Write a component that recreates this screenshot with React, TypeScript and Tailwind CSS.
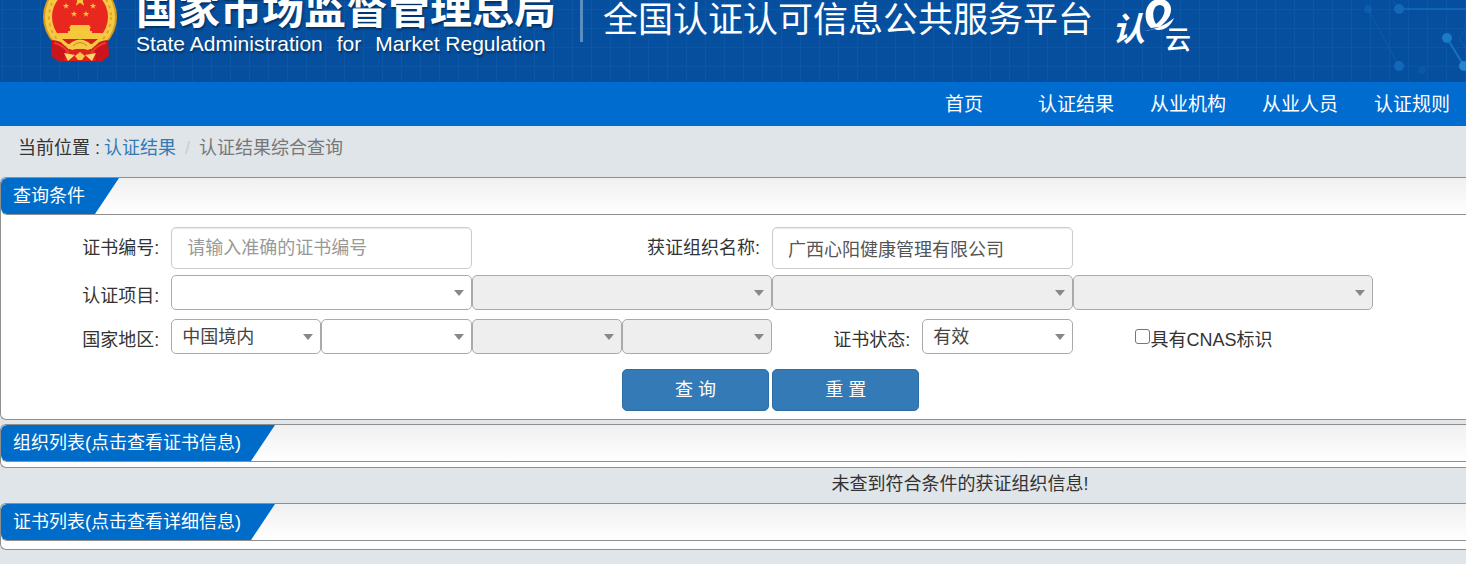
import type { ReactNode } from 'react'
import clsx from 'clsx'

const NAV = ['首页', '认证结果', '从业机构', '从业人员', '认证规则']

const STAR = '0,-10 2.4,-3.2 9.5,-3.1 3.8,1.2 5.9,8.1 0,4 -5.9,8.1 -3.8,1.2 -9.5,-3.1 -2.4,-3.2'

function Emblem() {
  return (
    <svg width="76" height="82" viewBox="0 0 76 82" aria-hidden className="shrink-0">
      <ellipse cx="38" cy="37" rx="37" ry="37" fill="#d99a1c" />
      <ellipse cx="38" cy="37" rx="35" ry="36" fill="#f6c944" />
      <ellipse cx="38" cy="37" rx="31" ry="33" fill="none" stroke="#e0a428" strokeWidth="2" strokeDasharray="3 4" />
      <circle cx="38" cy="37" r="28" fill="#e8281f" />
      <g fill="#f8c83c">
        <polygon points={STAR} transform="translate(38 20) scale(.7)" />
        <polygon points={STAR} transform="translate(24 26) scale(.33)" />
        <polygon points={STAR} transform="translate(51 26) scale(.33)" />
        <polygon points={STAR} transform="translate(32 34) scale(.33)" />
        <polygon points={STAR} transform="translate(44 34) scale(.33)" />
        <path d="M29 45h18l2 3h-1v3h2v2H26v-2h2v-3h-1z" />
        <path d="M15 53h46l-3 6H18z" />
      </g>
      <path d="M20 59h36l-6 5H26z" fill="#d81f1d" />
      {/* ribbons */}
      <path d="M10 60 Q18 60 23 66 L30 72 L24 81 L17 82 L9 76Z" fill="#c9151b" />
      <path d="M66 60 Q58 60 53 66 L46 72 L52 81 L59 82 L67 76Z" fill="#c9151b" />
      <path d="M24 69h28l2 12H22z" fill="#e0201f" />
      <path d="M12 63 Q20 64 27 73 M64 63 Q56 64 49 73" fill="none" stroke="#ee3a2c" strokeWidth="2" />
      <path d="M24 67 L30 62 Q38 57 46 62 L52 67 L46 70 L38 68 L30 70Z" fill="#f6c944" />
      <path d="M31 66 Q38 59 45 66" fill="none" stroke="#c98a1b" strokeWidth="1" />
      <path d="M22 73 L33 75 L26 81Z M54 73 L43 75 L50 81Z" fill="#f8d868" />
      <path d="M33 76 L38 72 L43 76 L40 80 L36 80Z" fill="#f6c944" />
    </svg>
  )
}

function CloudLogo() {
  return (
    <svg
      width="80"
      height="72"
      viewBox="0 0 80 72"
      role="img"
      aria-label="认e云"
      className="shrink-0 overflow-visible font-['Noto_Sans_CJK_SC',sans-serif]"
    >
      <text x="-1" y="47" fontSize="33" fontWeight="700" fontStyle="italic" fill="#fff">认</text>
      <path
        d="M38 34 C29 27 31 6 46 5 C60 5 61 19 53 27 L47 33Z M43 30 C53 23 54 11 47 11 C40 11 38 22 43 30Z"
        fill="#fff"
        fillRule="evenodd"
      />
      <path d="M29 37 C40 36 52 32 61 24 C57 34 48 38 41 35 C37 36 33 37 29 37Z" fill="#fff" />
      <text x="52" y="55" fontSize="26" fontWeight="500" fill="#fff">云</text>
    </svg>
  )
}

function Circuit() {
  return (
    <svg width="120" height="82" viewBox="0 0 120 82" aria-hidden className="absolute top-0 right-0">
      <g stroke="#1572c4" fill="none">
        <path d="M53 9H120" strokeWidth="2" opacity=".6" />
        <path d="M101 38L118 66" strokeWidth="2" />
        <path d="M22 9L53 66M47 0L53 9M120 28L113 38L120 49" opacity=".35" />
      </g>
      <g fill="#1468b9">
        <circle cx="22" cy="9" r="4" opacity=".5" />
        <circle cx="53" cy="9" r="5" />
        <circle cx="53" cy="66" r="5" />
        <circle cx="101" cy="38" r="5" fill="#1b7bc5" />
        <circle cx="118" cy="66" r="5" fill="#2385cd" />
        <circle cx="76" cy="70" r="4" opacity=".3" />
      </g>
    </svg>
  )
}

function PanelHeader({ title }: { title: string }) {
  return (
    <div className="flex rounded-l-md border-b border-[#8f8f8f] bg-linear-to-b from-[#f0f0f0] to-white">
      <h2 className="rounded-l-md bg-[#006cc9] pr-[34px] pl-3 leading-9 text-white [clip-path:polygon(0_0,100%_0,calc(100%-24px)_100%,0_100%)]">
        {title}
      </h2>
    </div>
  )
}

function Panel({ title, className, children }: { title: string; className?: string; children?: ReactNode }) {
  return (
    <section className={clsx('rounded-l-md border-y border-l border-[#8f8f8f] bg-white', className)}>
      <PanelHeader title={title} />
      {children}
    </section>
  )
}

function Label({ htmlFor, className, children }: { htmlFor: string; className?: string; children: ReactNode }) {
  return (
    <label htmlFor={htmlFor} className={clsx('pr-3 text-right whitespace-nowrap', className)}>
      {children}
    </label>
  )
}

function Select({
  id,
  label,
  value = '',
  disabled,
  wide,
}: {
  id: string
  label?: string
  value?: string
  disabled?: boolean
  wide?: boolean
}) {
  return (
    <div className={clsx('relative', wide && 'col-span-2')}>
      <select
        id={id}
        aria-label={label}
        disabled={disabled}
        defaultValue={value}
        className="block h-[35px] w-full appearance-none rounded-[5px] border border-[#aaa] bg-white pr-7 pl-[10px] text-[#444] disabled:bg-[#eee] disabled:opacity-100"
      >
        <option value={value}>{value}</option>
      </select>
      <span
        aria-hidden
        className="pointer-events-none absolute top-[15px] right-2 border-x-5 border-t-6 border-x-transparent border-t-[#888]"
      />
    </div>
  )
}

const INPUT =
  'col-span-2 h-[42px] w-full min-w-0 rounded-[5px] border border-[#ccc] bg-white px-[15px] text-[#555] shadow-[inset_0_1px_1px_rgba(0,0,0,0.08)] placeholder:text-[#999]'

export default function App() {
  return (
    <div className="min-h-screen bg-[#e0e5e9] font-['Liberation_Sans','Noto_Sans_CJK_SC',sans-serif] text-[18px] leading-6 font-normal text-[#333]">
      <header className="relative flex h-[82px] items-end overflow-hidden bg-[#064f9f] bg-[linear-gradient(to_right,#0a56a7_1px,transparent_1px),linear-gradient(to_bottom,#0a56a7_1px,transparent_1px)] bg-size-[19px_19px] bg-position-[2px_9px] pb-5 pl-[42px] text-white">
        <Circuit />
        <Emblem />
        <div className="ml-[18px] pb-[6px] whitespace-nowrap text-shadow-[1px_2px_2px_rgba(0,0,0,0.4)]">
          <p className="text-[42px] leading-[44px] font-bold">国家市场监督管理总局</p>
          <p className="flex gap-[14px] text-[21px] leading-6">
            <span>State Administration</span>
            <span>for</span>
            <span>Market Regulation</span>
          </p>
        </div>
        <div className="mb-5 ml-6 h-16 w-[3px] shrink-0 bg-[#5b8cc2]" />
        <h1 className="mb-5 ml-5 text-[35px] leading-[44px] whitespace-nowrap">全国认证认可信息公共服务平台</h1>
        <div className="-mb-1 ml-5">
          <CloudLogo />
        </div>
      </header>

      <nav className="flex h-11 items-center justify-end gap-9 bg-[#006cd0] pt-[2px] pr-4 text-[19px] text-white">
        {NAV.map((item) => (
          <a key={item} href="#" className="w-[76px] text-center whitespace-nowrap">
            {item}
          </a>
        ))}
      </nav>

      <div className="flex items-center px-[18px] pt-[10px] pb-[17px]">
        <span>当前位置 :</span>
        <a href="#" className="ml-1 text-[#337ab7]">认证结果</a>
        <span className="mx-[9px] text-[#ccc]">/</span>
        <span className="text-[#777]">认证结果综合查询</span>
      </div>

      <Panel title="查询条件">
        <form className="pt-3 pr-[93px] pb-2 pl-5" onSubmit={(e) => e.preventDefault()}>
          <div className="grid grid-cols-9 items-center">
            <Label htmlFor="cert-no">证书编号:</Label>
            <input id="cert-no" placeholder="请输入准确的证书编号" className={INPUT} />
            <Label htmlFor="org-name" className="col-span-2">获证组织名称:</Label>
            <input id="org-name" defaultValue="广西心阳健康管理有限公司" className={INPUT} />
          </div>
          <div className="mt-[6px] grid grid-cols-9 items-center">
            <Label htmlFor="item-1" className="pt-[6px]">认证项目:</Label>
            <Select id="item-1" wide />
            <Select id="item-2" label="认证项目" wide disabled />
            <Select id="item-3" label="认证项目" wide disabled />
            <Select id="item-4" label="认证项目" wide disabled />
          </div>
          <div className="mt-[9px] grid grid-cols-9 items-center">
            <Label htmlFor="area-1" className="pt-[6px]">国家地区:</Label>
            <Select id="area-1" value="中国境内" />
            <Select id="area-2" label="国家地区" />
            <Select id="area-3" label="国家地区" disabled />
            <Select id="area-4" label="国家地区" disabled />
            <Label htmlFor="status" className="pt-[6px]">证书状态:</Label>
            <Select id="status" value="有效" />
            <label className="col-span-2 flex items-center pt-[6px] pl-[62px] whitespace-nowrap">
              <input
                type="checkbox"
                className="mr-px mb-[6px] size-[15px] shrink-0 appearance-none rounded-[3px] border border-[#767676] bg-white checked:bg-[#337ab7]"
              />
              具有CNAS标识
            </label>
          </div>
          <div className="mt-[15px] grid grid-cols-9">
            <div className="col-start-5 pr-[3px]">
              <button type="submit" className="h-[42px] w-full rounded-[5px] border border-[#2e6da4] bg-[#337ab7] text-white">
                查 询
              </button>
            </div>
            <div className="pr-[3px]">
              <button type="reset" className="h-[42px] w-full rounded-[5px] border border-[#2e6da4] bg-[#337ab7] text-white">
                重 置
              </button>
            </div>
          </div>
        </form>
      </Panel>

      <Panel title="组织列表(点击查看证书信息)" className="mt-1 pb-[5px]" />

      <p className="pt-1 pb-[7px] pl-[454px] text-center">未查到符合条件的获证组织信息!</p>

      <Panel title="证书列表(点击查看详细信息)" className="pb-2" />
    </div>
  )
}
